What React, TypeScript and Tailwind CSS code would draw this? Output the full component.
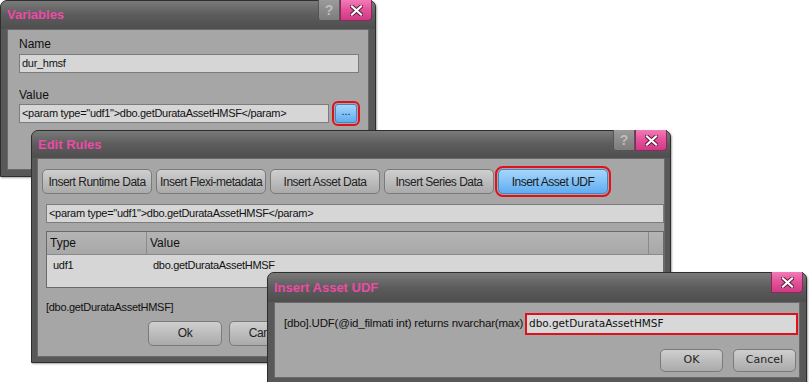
import React from "react";

const font = { fontFamily: '"Liberation Sans", Arial, sans-serif' };
const tahoma = { fontFamily: '"DejaVu Sans", Verdana, sans-serif' };

type WinProps = {
  title: string;
  className: string;
  help?: boolean;
  titleH: string;
  children: React.ReactNode;
};

const Win = ({ title, className, help, titleH, children }: WinProps) => (
  <div
    className={`absolute flex flex-col rounded-t-[7px] border border-[#2e2e2e] bg-[#585858] shadow-[1px_1px_2px_rgba(0,0,0,0.35)] ${className}`}
  >
    <div
      className={`relative flex ${titleH} shrink-0 items-center rounded-t-[6px] bg-gradient-to-b from-[#7a7a7a] via-[#5c5c5c] to-[#4e4e4e] pl-[6px]`}
    >
      <span className="text-[13px] font-bold text-[#ec4ba6]" style={font}>
        {title}
      </span>
      <div className="absolute right-[3px] top-[-1px] flex">
        {help && (
          <div className="flex h-[21px] w-[22px] items-center justify-center rounded-bl-[3px] border border-t-0 border-[#555] bg-gradient-to-b from-[#9a9a9a] to-[#7d7d7d] text-[14px] font-bold text-[#bdbdbd]" style={font}>
            ?
          </div>
        )}
        <div className="flex h-[21px] w-[32px] items-center justify-center rounded-br-[4px] border border-t-0 border-[#8a2a5a] bg-gradient-to-b from-[#f27ab6] via-[#e4509a] to-[#d03a86]">
          <svg width="13" height="11" viewBox="0 0 13 11">
            <path d="M2 1.5 L11 9.5 M11 1.5 L2 9.5" stroke="#5a1a3a" strokeWidth="4" strokeLinecap="square" />
            <path d="M2 1.5 L11 9.5 M11 1.5 L2 9.5" stroke="#fff" strokeWidth="2.2" strokeLinecap="square" />
          </svg>
        </div>
      </div>
    </div>
    {children}
  </div>
);

const Btn = ({ label, w, hot }: { label: string; w: string; hot?: boolean }) => (
  <div
    className={`flex h-[25px] ${w} items-center justify-center whitespace-nowrap rounded-[5px] border text-[12px] tracking-[-0.5px] ${
      hot
        ? "border-[#4a84c0] bg-gradient-to-b from-[#a6d6fb] to-[#5fadf0] text-[#1a1a1a] outline outline-2 outline-offset-1 outline-[#e0101c]"
        : "border-[#7a7a7a] bg-gradient-to-b from-[#cfcfcf] to-[#aaaaaa] text-[#222]"
    }`}
    style={font}
  >
    {label}
  </div>
);

const Field = ({ text, className }: { text: string; className: string }) => (
  <div
    className={`flex h-[19px] items-center whitespace-nowrap border border-[#7c7c7c] bg-[#d6d6d6] px-[2px] text-[11px] tracking-[-0.3px] text-[#111] ${className}`}
    style={font}
  >
    {text}
  </div>
);

const param = '<param type="udf1">dbo.getDurataAssetHMSF</param>';

export default function App() {
  return (
    <div className="relative h-[382px] w-[809px] overflow-hidden bg-white">
      {/* Variables */}
      <Win title="Variables" className="left-0 top-0 h-[177px] w-[376px]" help titleH="h-[28px]">
        <div className="mx-[6px] mb-[6px] flex flex-1 flex-col border border-[#6a6a6a] bg-[#a6a6a6] px-[11px] pt-[7px]">
          <div className="text-[12px] leading-[14px] text-[#111]" style={font}>Name</div>
          <Field text="dur_hmsf" className="mt-[3px] w-[340px]" />
          <div className="mt-[15px] text-[12px] leading-[14px] text-[#111]" style={font}>Value</div>
          <div className="mt-[2px] flex items-center gap-[6px]">
            <Field text={param} className="w-[312px]" />
            <div className="flex h-[19px] w-[22px] items-center justify-center rounded-[3px] border border-[#4a84c0] bg-gradient-to-b from-[#a6d6fb] to-[#5fadf0] pb-[4px] text-[11px] text-[#222] outline outline-2 outline-offset-1 outline-[#e0101c]" style={font}>
              ...
            </div>
          </div>
        </div>
      </Win>

      {/* Edit Rules */}
      <Win title="Edit Rules" className="left-[31px] top-[130px] h-[233px] w-[640px]" help titleH="h-[27px]">
        <div className="mx-[5px] mb-[5px] flex flex-1 flex-col border border-[#6a6a6a] bg-[#a6a6a6] pl-[4px] pt-[10px]">
          <div className="flex gap-[4px]">
            <Btn label="Insert Runtime Data" w="w-[110px]" />
            <Btn label="Insert Flexi-metadata" w="w-[110px]" />
            <Btn label="Insert Asset Data" w="w-[110px]" />
            <Btn label="Insert Series Data" w="w-[110px]" />
            <Btn label="Insert Asset UDF" w="w-[110px]" hot />
          </div>
          <Field text={param} className="ml-[4px] mt-[10px] w-[618px]" />
          <div className="ml-[4px] mt-[8px] flex h-[57px] w-[618px] flex-col border border-[#6a6a6a] bg-[#d6d6d6] text-[12px] text-[#111]" style={font}>
            <div className="flex h-[23px] border-b border-[#8a8a8a] bg-gradient-to-b from-[#b4b4b4] to-[#a8a8a8]">
              <div className="flex w-[100px] items-center border-r border-[#8a8a8a] pl-[3px]">Type</div>
              <div className="flex flex-1 items-center border-r border-[#8a8a8a] pl-[3px]">Value</div>
              <div className="w-[14px]" />
            </div>
            <div className="flex h-[20px] items-center text-[11px] tracking-[-0.3px]">
              <div className="w-[100px] pl-[6px]">udf1</div>
              <div className="pl-[6px]">dbo.getDurataAssetHMSF</div>
            </div>
          </div>
          <div className="ml-[4px] mt-[11px] text-[11px] tracking-[-0.3px] text-[#111]" style={font}>
            [dbo.getDurataAssetHMSF]
          </div>
          <div className="ml-[106px] mt-[5px] flex gap-[7px]">
            <Btn label="Ok" w="w-[74px]" />
            <Btn label="Cancel" w="w-[74px]" />
          </div>
        </div>
      </Win>

      {/* Insert Asset UDF */}
      <Win title="Insert Asset UDF" className="left-[267px] top-[272px] h-[112px] w-[540px]" titleH="h-[29px]">
        <div className="mx-[6px] mb-[5px] flex flex-1 flex-col border border-[#6a6a6a] bg-[#a6a6a6] pl-[9px] pt-[10px]">
          <div className="flex items-center gap-[7px]">
            <span className="w-[234px] whitespace-nowrap text-[11.5px] tracking-[-0.2px] text-[#111]" style={font}>
              [dbo].UDF(@id_filmati int) returns nvarchar(max)
            </span>
            <div className="flex h-[22px] w-[273px] items-center whitespace-nowrap border-2 border-[#e0101c] bg-[#d8d8d8] px-[2px] text-[10.5px] text-[#111]" style={tahoma}>
              dbo.getDurataAssetHMSF
            </div>
          </div>
          <div className="mr-[3px] mt-[14px] flex justify-end gap-[10px]">
            <div className="flex h-[23px] w-[63px] items-center justify-center rounded-[5px] border border-[#7a7a7a] bg-gradient-to-b from-[#cfcfcf] to-[#aaaaaa] text-[11px] text-[#222]" style={tahoma}>OK</div>
            <div className="flex h-[23px] w-[63px] items-center justify-center rounded-[5px] border border-[#7a7a7a] bg-gradient-to-b from-[#cfcfcf] to-[#aaaaaa] text-[11px] text-[#222]" style={tahoma}>Cancel</div>
          </div>
        </div>
      </Win>
    </div>
  );
}
